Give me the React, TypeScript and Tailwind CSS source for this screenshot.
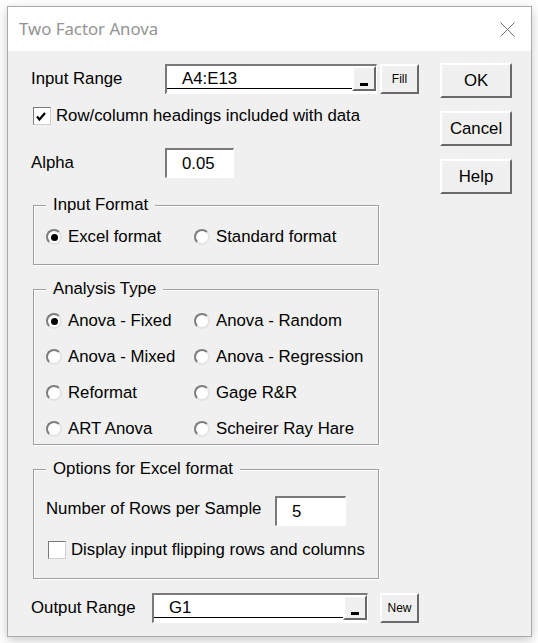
import { FC, ReactNode } from "react";

const raised =
  "bg-[#f0f0f0] border-t-2 border-l-2 border-t-white border-l-white border-b-2 border-r-2 border-b-[#696969] border-r-[#696969]";
const sunken =
  "bg-white border-t-2 border-l-2 border-t-[#7a7a7a] border-l-[#7a7a7a] border-b border-r border-b-white border-r-white";

const RefEdit: FC<{ value: string; width: string }> = ({ value, width }) => (
  <div className={`${sunken} ${width} h-[30px] flex`}>
    <div className="flex-1 flex items-end pl-[15px] mb-[4px] border-b border-black leading-[18px]">
      {value}
    </div>
    <div className={`${raised} w-[24px] mb-[2px] flex items-end justify-center pb-[3px]`}>
      <div className="w-[8px] h-[3px] bg-black" />
    </div>
  </div>
);

const TextBox: FC<{ value: string; width: string }> = ({ value, width }) => (
  <div className={`${sunken} ${width} h-[30px] flex items-center pl-[15px]`}>{value}</div>
);

const SmallButton: FC<{ label: string }> = ({ label }) => (
  <div className={`${raised} w-[39px] h-[30px] flex items-center justify-center text-[12px]`}>
    {label}
  </div>
);

const Checkbox: FC<{ checked?: boolean; label: string; className?: string }> = ({
  checked,
  label,
  className,
}) => (
  <div className={`flex items-center gap-[5px] ${className ?? ""}`}>
    <div className="w-[18px] h-[18px] bg-white border border-t-[#7a7a7a] border-l-[#7a7a7a] border-b-[#d0d0d0] border-r-[#d0d0d0] flex items-center pl-[2px]">
      {checked && (
        <svg width="10" height="9" viewBox="0 0 10 9">
          <path d="M1 4.5 L3.5 7.5 L9 1" fill="none" stroke="#000" strokeWidth="2.2" />
        </svg>
      )}
    </div>
    <span>{label}</span>
  </div>
);

const Radio: FC<{ checked?: boolean; label: string }> = ({ checked, label }) => (
  <div className="flex items-center gap-[6px] h-[20px]">
    <div className="w-[16px] h-[16px] rounded-full bg-white border-2 border-t-[#7d7d7d] border-l-[#7d7d7d] border-b-[#e4e4e4] border-r-[#e4e4e4] flex items-center justify-center">
      {checked && <div className="w-[7px] h-[7px] rounded-full bg-black" />}
    </div>
    <span>{label}</span>
  </div>
);

const Group: FC<{ title: string; className: string; children: ReactNode }> = ({
  title,
  className,
  children,
}) => (
  <fieldset
    className={`ml-[2px] w-[346px] border border-[#a0a0a0] shadow-[inset_1px_1px_0_#fff,1px_1px_0_#fff] px-[12px] ${className}`}
  >
    <legend className="px-[7px] leading-[20px] bg-[#f0f0f0]">{title}</legend>
    {children}
  </fieldset>
);

const SideButton: FC<{ label: string }> = ({ label }) => (
  <div className={`${raised} w-[72px] h-[35px] flex items-center justify-center`}>{label}</div>
);

export default function App() {
  return (
    <div className="min-h-screen bg-white pt-[6px] pl-[7px] text-[16.8px] text-black font-['Liberation_Sans',Arial,sans-serif]">
      <div className="w-[525px] h-[631px] border border-[#aaaaaa] shadow-[0_3px_10px_rgba(0,0,0,0.22)] flex flex-col">
        <div className="h-[44px] bg-white flex items-center justify-between pl-[11px] pr-[16px]">
          <span className="font-['Noto_Sans',sans-serif] text-[16.8px] text-[#939393]">
            Two Factor Anova
          </span>
          <svg width="15" height="15" viewBox="0 0 15 15">
            <path d="M0.5 0.5 L14.5 14.5 M14.5 0.5 L0.5 14.5" stroke="#707070" strokeWidth="1" />
          </svg>
        </div>

        <div className="flex-1 bg-[#f0f0f0] flex justify-between pl-[23px] pr-[19px]">
          <div className="flex flex-col pt-[13px]">
            <div className="flex items-center h-[30px]">
              <span className="w-[134px]">Input Range</span>
              <RefEdit value="A4:E13" width="w-[212px]" />
              <div className="ml-[3px]">
                <SmallButton label="Fill" />
              </div>
            </div>

            <Checkbox
              checked
              label="Row/column headings included with data"
              className="mt-[13px] ml-[2px] h-[18px]"
            />

            <div className="flex items-center h-[30px] mt-[23px]">
              <span className="w-[134px]">Alpha</span>
              <TextBox value="0.05" width="w-[69px]" />
            </div>

            <Group title="Input Format" className="mt-[17px] pt-[12px] pb-[17px]">
              <div className="grid grid-cols-[148px_1fr]">
                <Radio checked label="Excel format" />
                <Radio label="Standard format" />
              </div>
            </Group>

            <Group title="Analysis Type" className="mt-[14px] pt-[12px] pb-[5px]">
              <div className="grid grid-cols-[148px_1fr] gap-y-[16px]">
                <Radio checked label="Anova - Fixed" />
                <Radio label="Anova - Random" />
                <Radio label="Anova - Mixed" />
                <Radio label="Anova - Regression" />
                <Radio label="Reformat" />
                <Radio label="Gage R&R" />
                <Radio label="ART Anova" />
                <Radio label="Scheirer Ray Hare" />
              </div>
            </Group>

            <Group title="Options for Excel format" className="mt-[14px] pt-[17px] pb-[18px]">
              <div className="flex items-center h-[30px]">
                <span className="w-[229px] -mt-[4px]">Number of Rows per Sample</span>
                <TextBox value="5" width="w-[71px]" />
              </div>
              <Checkbox
                label="Display input flipping rows and columns"
                className="mt-[14px] ml-[2px] h-[20px]"
              />
            </Group>

            <div className="flex items-center h-[30px] mt-[14px]">
              <span className="w-[121px]">Output Range</span>
              <RefEdit value="G1" width="w-[216px]" />
              <div className="ml-[12px]">
                <SmallButton label="New" />
              </div>
            </div>
          </div>

          <div className="flex flex-col gap-[13px] pt-[12px] w-[72px]">
            <SideButton label="OK" />
            <SideButton label="Cancel" />
            <SideButton label="Help" />
          </div>
        </div>
      </div>
    </div>
  );
}
